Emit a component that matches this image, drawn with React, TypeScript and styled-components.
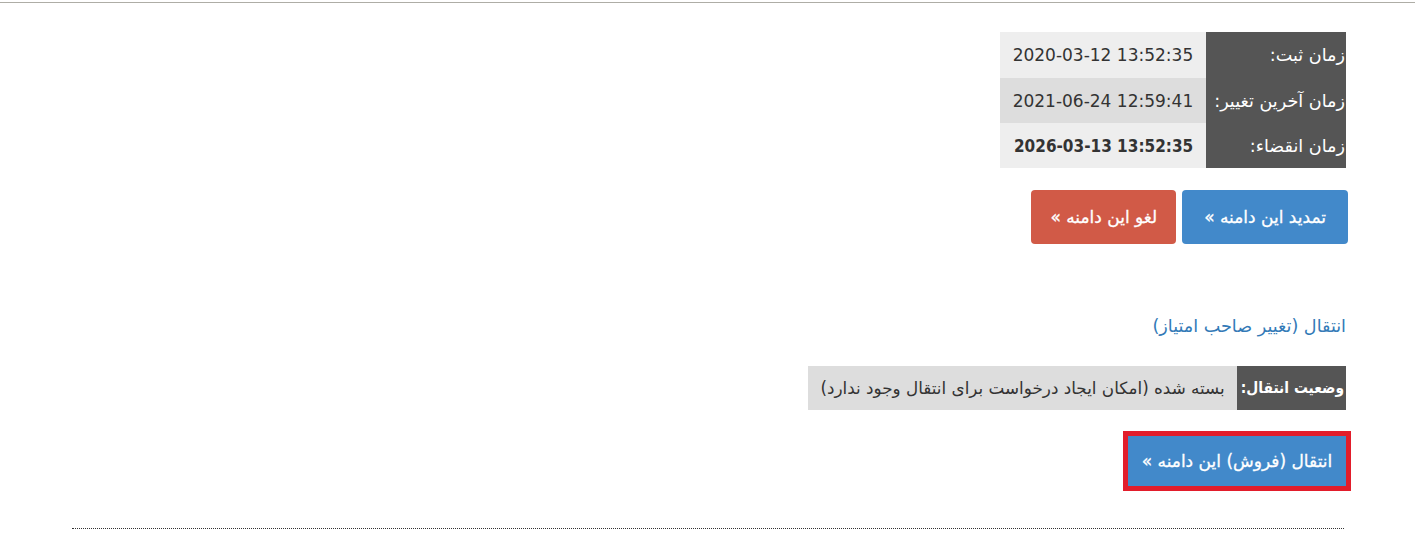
import React from "react";
import styled, { createGlobalStyle } from "styled-components";

const GlobalStyle = createGlobalStyle`
  body {
    margin: 0;
    background: #ffffff;
    font-family: "DejaVu Sans", "Noto Sans", sans-serif;
    color: #333333;
  }
`;

type InfoRow = { label: string; value: string; shade: "light" | "dark"; strong?: boolean };

const rows: InfoRow[] = [
  { label: "زمان ثبت:", value: "2020-03-12 13:52:35", shade: "light" },
  { label: "زمان آخرین تغییر:", value: "2021-06-24 12:59:41", shade: "dark" },
  { label: "زمان انقضاء:", value: "2026-03-13 13:52:35", shade: "light", strong: true },
];

function App() {
  return (
    <>
      <GlobalStyle />
      <TopRule />
      <Content>
        <InfoTable>
          <tbody>
            {rows.map((row, i) => (
              <tr key={row.label}>
                <LabelCell $first={i === 0}>{row.label}</LabelCell>
                <ValueCell $shade={row.shade} $strong={row.strong}>
                  <Ltr>{row.value}</Ltr>
                </ValueCell>
              </tr>
            ))}
          </tbody>
        </InfoTable>

        <ButtonRow>
          <ActionButton $variant="primary">تمدید این دامنه »</ActionButton>
          <ActionButton $variant="danger">لغو این دامنه »</ActionButton>
        </ButtonRow>

        <SectionLink href="#">انتقال (تغییر صاحب امتیاز)</SectionLink>

        <StatusTable>
          <tbody>
            <tr>
              <StatusLabel>وضعیت انتقال:</StatusLabel>
              <StatusValue>بسته شده (امکان ایجاد درخواست برای انتقال وجود ندارد)</StatusValue>
            </tr>
          </tbody>
        </StatusTable>

        <Highlight>
          <TransferButton>انتقال (فروش) این دامنه »</TransferButton>
        </Highlight>

        <DottedRule />
      </Content>
    </>
  );
}

export default App;

const TopRule = styled.div`
  margin-top: 2px;
  border-top: 1px solid #aeada6;
`;

const Content = styled.div`
  direction: rtl;
  margin-left: 72px;
  width: 1274px;
  padding-top: 29px;
`;

const InfoTable = styled.table`
  border-collapse: collapse;
  border-spacing: 0;
`;

const LabelCell = styled.td<{ $first?: boolean }>`
  background: #555555;
  color: #ffffff;
  font-size: 17.6px;
  height: ${(p) => (p.$first ? "46px" : "45px")};
  padding: 0 1px 0 8px;
  vertical-align: middle;
  white-space: nowrap;
`;

const ValueCell = styled.td<{ $shade: "light" | "dark"; $strong?: boolean }>`
  background: ${(p) => (p.$shade === "dark" ? "#dddddd" : "#eeeeee")};
  color: #333333;
  font-size: 17px;
  font-family: ${(p) =>
    p.$strong ? '"DejaVu Sans Condensed", "DejaVu Sans", sans-serif' : '"DejaVu Sans", sans-serif'};
  font-weight: ${(p) => (p.$strong ? 700 : 400)};
  padding: 0 13px;
  vertical-align: middle;
  white-space: nowrap;
`;

const Ltr = styled.span`
  direction: ltr;
  unicode-bidi: embed;
`;

const ButtonRow = styled.div`
  display: flex;
  gap: 6px;
  margin-top: 22px;
  margin-right: -2px;
`;

const ActionButton = styled.button<{ $variant: "primary" | "danger" }>`
  height: 54px;
  padding: 0 ${(p) => (p.$variant === "primary" ? "22px" : "19px")};
  border: none;
  border-radius: 4px;
  background: ${(p) => (p.$variant === "primary" ? "#4289ca" : "#d15a47")};
  color: #ffffff;
  font-family: "DejaVu Sans", sans-serif;
  font-size: 17px;
  font-weight: 400;
  -webkit-text-stroke: 0.3px #ffffff;
  cursor: pointer;
`;

const SectionLink = styled.a`
  display: block;
  margin-top: 70px;
  line-height: 24px;
  font-size: 17.6px;
  color: #337ab7;
  text-decoration: none;
`;

const StatusTable = styled.table`
  border-collapse: collapse;
  margin-top: 28px;
`;

const StatusLabel = styled.td`
  background: #555555;
  color: #ffffff;
  font-family: "DejaVu Sans Condensed", "DejaVu Sans", sans-serif;
  font-size: 15.4px;
  font-weight: 700;
  height: 44px;
  padding: 0 2px 0 4px;
  vertical-align: middle;
  white-space: nowrap;
`;

const StatusValue = styled.td`
  background: #dddddd;
  color: #333333;
  font-size: 16.8px;
  padding: 0 12px;
  vertical-align: middle;
  white-space: nowrap;
`;

const Highlight = styled.div`
  display: inline-flex;
  margin-top: 21px;
  margin-right: -5px;
  border: 5px solid #e21d2b;
`;

const TransferButton = styled.button`
  width: 218px;
  height: 50px;
  border: none;
  background: #4289ca;
  color: #ffffff;
  font-family: "DejaVu Sans", sans-serif;
  font-size: 17px;
  font-weight: 400;
  -webkit-text-stroke: 0.3px #ffffff;
  cursor: pointer;
`;

const DottedRule = styled.div`
  margin-top: 37px;
  width: 1272px;
  margin-right: 2px;
  border-top: 1px dotted #333333;
`;
